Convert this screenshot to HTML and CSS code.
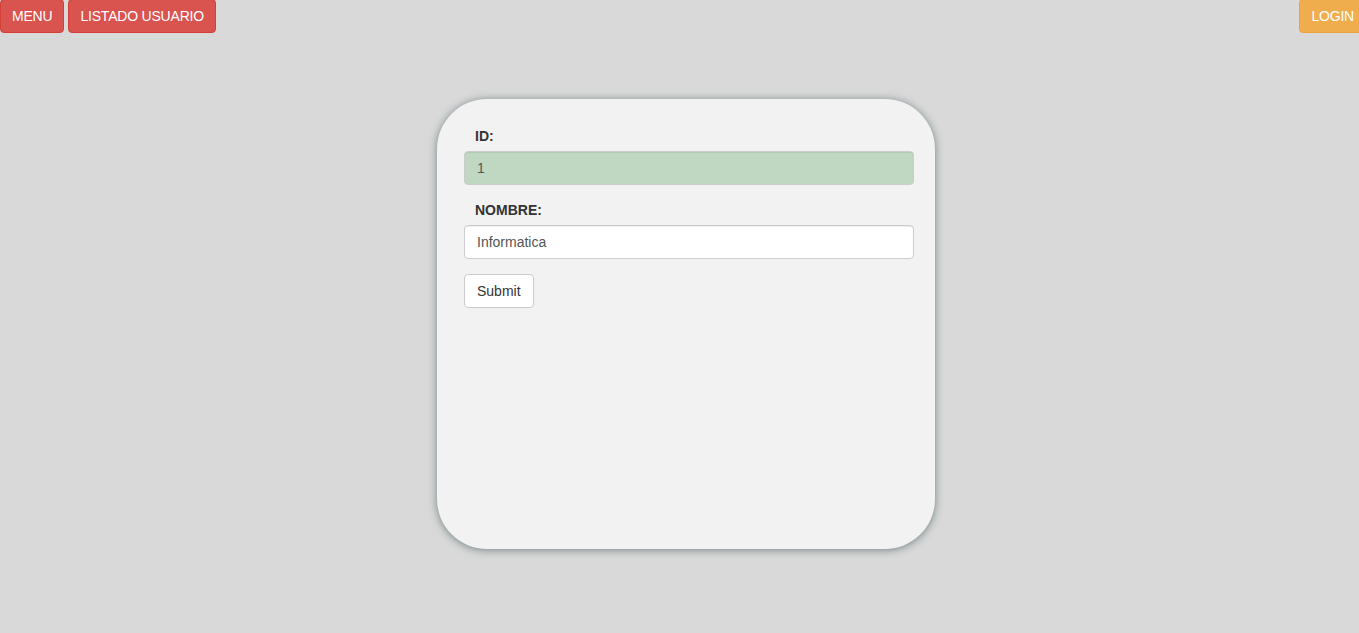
FILE: index.html
```html
<!DOCTYPE html>
<html lang="es">
<head>
<meta charset="utf-8">
<title>Usuario</title>
<link rel="stylesheet" href="styles.css">
</head>
<body>
<header class="topbar">
  <nav class="nav-left">
    <a class="btn btn-nav btn-danger" href="#">MENU</a>
    <a class="btn btn-nav btn-danger" href="#">LISTADO USUARIO</a>
  </nav>
  <a class="btn btn-nav btn-warning btn-login" href="#">LOGIN</a>
</header>
<main class="stage">
  <section class="card">
    <form class="form">
      <div class="form-group">
        <label class="label" for="id">ID:</label>
        <input class="input input-readonly" id="id" type="text" value="1" readonly>
      </div>
      <div class="form-group">
        <label class="label" for="nombre">NOMBRE:</label>
        <input class="input" id="nombre" type="text" value="Informatica">
      </div>
      <button class="btn btn-default" type="button">Submit</button>
    </form>
  </section>
</main>
</body>
</html>
```
FILE: styles.css
```css
* { box-sizing: border-box; }
html, body { margin: 0; padding: 0; }
body {
  background: #d9d9d9;
  font-family: "Liberation Sans", Arial, sans-serif;
  font-size: 14px;
  line-height: 1.42857;
  color: #333;
  overflow-x: hidden;
  height: 633px;
}
.topbar {
  display: flex;
  justify-content: space-between;
  align-items: flex-start;
  margin-top: -1px;
}
.nav-left { display: flex; gap: 4px; }
.btn {
  display: inline-block;
  padding: 6px 12px;
  font-family: inherit;
  font-size: 14px;
  line-height: 20px;
  border: 1px solid transparent;
  border-radius: 4px;
  text-decoration: none;
  cursor: pointer;
  white-space: nowrap;
}
.btn-nav { letter-spacing: -0.2px; padding-left: 11px; padding-right: 11px; }
.btn-danger { background: #d9534f; border-color: #d43f3a; color: #fff; }
.btn-warning { background: #f0ad4e; border-color: #eea236; color: #fff; }
.btn-login { margin-right: -7px; }
.btn-default { background: #fff; border-color: #ccc; color: #333; }
.stage {
  display: flex;
  justify-content: center;
  padding: 66px 0 0 13px;
}
.card {
  width: 498px;
  height: 450px;
  background: #f2f2f2;
  border-radius: 50px;
  box-shadow: 0 1px 9px rgba(60, 82, 86, 0.65);
  padding: 27px 21px 0 27px;
}
.form-group { margin-bottom: 15px; display: flex; flex-direction: column; }
.label {
  font-weight: bold;
  padding-left: 11px;
  margin-bottom: 5px;
  line-height: 20px;
}
.input {
  height: 34px;
  padding: 6px 12px;
  font-family: inherit;
  font-size: 14px;
  color: #555;
  background: #fff;
  border: 1px solid #ccc;
  border-radius: 4px;
  box-shadow: inset 0 1px 1px rgba(0,0,0,.075);
  width: 100%;
}
.input-readonly { background: #c0d7c2; }
```
